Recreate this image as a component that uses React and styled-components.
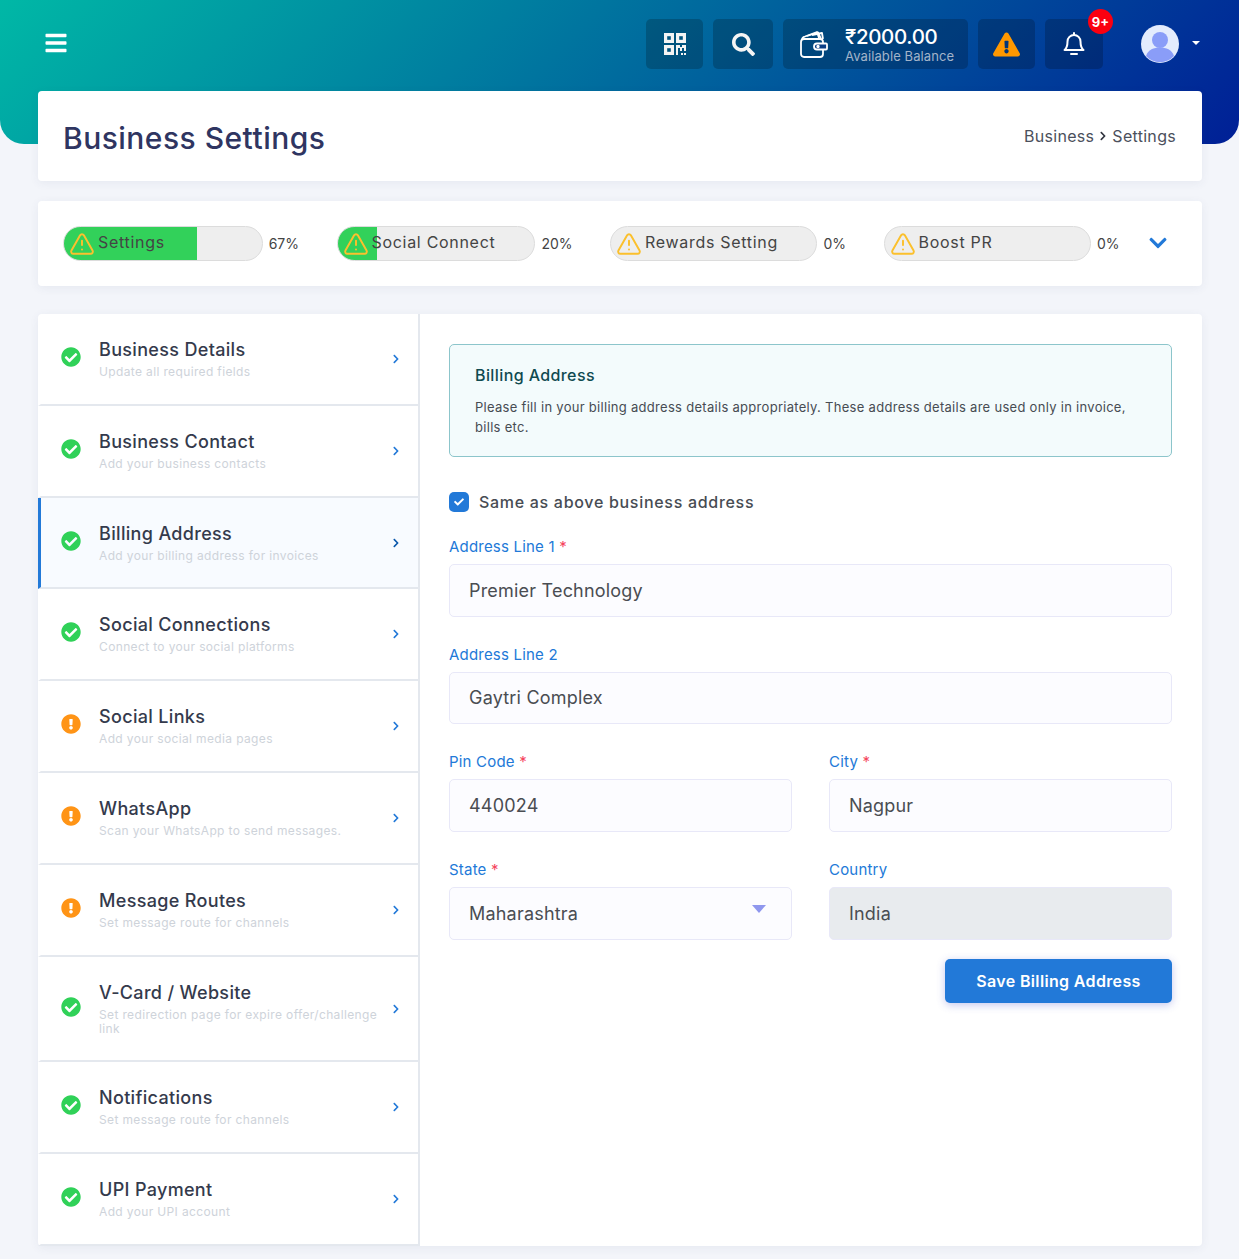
import styled, { createGlobalStyle } from 'styled-components';
import {
  FaBars,
  FaSearch,
  FaExclamationTriangle,
  FaChevronDown,
  FaChevronRight,
  FaCheckCircle,
  FaExclamationCircle,
  FaCheck,
} from 'react-icons/fa';
import { TriangleAlert } from 'lucide-react';

const GlobalStyle = createGlobalStyle`
  * { box-sizing: border-box; }
  body {
    margin: 0;
    background: #f3f5fa;
    font-family: Inter, "Noto Sans", "Liberation Sans", sans-serif;
    color: #444;
  }
`;

const Page = styled.div`
  min-height: 1259px;
  padding-bottom: 13px;
`;

const TopBand = styled.header`
  height: 144px;
  padding: 19px 39px 0 43.5px;
  display: flex;
  align-items: flex-start;
  background: linear-gradient(135deg, #00b8a6 0%, #001f96 100%);
  border-radius: 0 0 24px 24px;
  color: #fff;
`;

const Burger = styled.div`
  height: 50px;
  display: flex;
  align-items: center;
  font-size: 24px;
  margin-right: auto;
  margin-top: -1px;
`;

const ToolRow = styled.div`
  display: flex;
  gap: 10px;
`;

const ToolButton = styled.div`
  position: relative;
  width: ${(p) => p.$w}px;
  height: 50px;
  display: flex;
  align-items: center;
  justify-content: center;
  background: rgba(0, 0, 0, 0.2);
  border-radius: 5px;
`;

const WalletButton = styled(ToolButton)`
  justify-content: flex-start;
  padding-left: 17px;
  gap: 17px;
`;

const Balance = styled.div`
  display: flex;
  flex-direction: column;
`;

const Amount = styled.span`
  font-size: 20.5px;
  line-height: 24px;
  font-weight: 500;
  letter-spacing: -0.35px;
  margin-top: 1px;
`;

const BalanceNote = styled.span`
  font-size: 13px;
  line-height: 15px;
  letter-spacing: 0.1px;
  color: #a3b4c9;
`;

const Badge = styled.span`
  position: absolute;
  top: -10px;
  right: -10px;
  width: 25px;
  height: 25px;
  border-radius: 50%;
  background: #fb0010;
  display: flex;
  align-items: center;
  justify-content: center;
  font-size: 13px;
  font-weight: 700;
`;

const UserMenu = styled.div`
  height: 50px;
  margin-left: 38px;
  display: flex;
  align-items: center;
  gap: 13px;
`;

const Avatar = styled.svg`
  width: 38px;
  height: 38px;
  display: block;
`;

const MenuCaret = styled.span`
  width: 0;
  height: 0;
  border-left: 4px solid transparent;
  border-right: 4px solid transparent;
  border-top: 4px solid #fff;
  margin-top: -2px;
`;

const Content = styled.main`
  margin: -53px 37px 0 38px;
  display: flex;
  flex-direction: column;
`;

const Card = styled.section`
  background: #fff;
  border-radius: 4px;
  box-shadow: 0 2px 10px rgba(60, 70, 120, 0.07);
`;

const TitleCard = styled(Card)`
  height: 90px;
  padding: 3px 26px 0 25px;
  display: flex;
  align-items: center;
  justify-content: space-between;
`;

const PageTitle = styled.h1`
  margin: 0;
  font-size: 30px;
  font-weight: 500;
  letter-spacing: 0.47px;
  color: #2f3561;
`;

const Crumbs = styled.div`
  display: flex;
  align-items: center;
  gap: 4px;
  font-size: 16px;
  letter-spacing: 0.3px;
  color: #4b505c;
  margin-top: -3px;
`;

const CrumbArrow = styled.span`
  display: flex;
  font-size: 10px;
  color: #30343f;
`;

const ProgressCard = styled(Card)`
  margin-top: 20px;
  height: 85px;
  padding: 0 25px;
  display: grid;
  grid-template-columns: repeat(4, 236px) 1fr;
  column-gap: 37.5px;
  align-items: center;
`;

const ProgressItem = styled.div`
  display: flex;
  align-items: center;
  gap: 6px;
`;

const Pill = styled.div`
  flex: 1;
  height: 35px;
  padding-left: 5px;
  display: flex;
  align-items: center;
  gap: 3px;
  border: 1px solid #dcdcdc;
  border-radius: 18px;
  background: linear-gradient(
    to right,
    #32d15a ${(p) => p.$pct}%,
    #eeeeee ${(p) => p.$pct}%
  );
  color: #444;
  white-space: nowrap;
  overflow: hidden;
`;

const PillLabel = styled.span`
  font-size: 16px;
  letter-spacing: 0.7px;
  margin-top: -3px;
`;

const Percent = styled.span`
  font-size: 14px;
  color: #444;
`;

const Expand = styled.div`
  margin-left: -9px;
  font-size: 20px;
  color: #2279d8;
  display: flex;
  margin-top: -2px;
`;

const MainCard = styled(Card)`
  margin-top: 28px;
  display: flex;
  align-items: stretch;
`;

const Sidebar = styled.nav`
  flex: 0 0 381.5px;
  border-right: 2px solid #e4e8ee;
`;

const SideItem = styled.div`
  display: flex;
  align-items: center;
  padding: 22px 17px 24.8px 20px;
  border-left: 3px solid ${(p) => (p.$active ? '#2279d8' : 'transparent')};
  border-bottom: 2px solid #e4e8ee;
  background: ${(p) => (p.$active ? '#f8fbff' : 'transparent')};
`;

const StatusIcon = styled.div`
  flex: 0 0 20px;
  display: flex;
  font-size: 20px;
  margin-top: -1px;
  color: ${(p) => (p.$warn ? '#ff9416' : '#30d158')};
`;

const SideText = styled.div`
  flex: 1;
  margin-left: 18px;
  margin-right: 12px;
`;

const SideTitle = styled.div`
  font-size: 18px;
  line-height: 27px;
  font-weight: 500;
  letter-spacing: 0.33px;
  color: #343a4c;
`;

const SideNote = styled.div`
  margin-top: 2px;
  font-size: 12px;
  line-height: 14px;
  letter-spacing: 0.36px;
  color: #ced3da;
`;

const SideArrow = styled.div`
  flex: 0 0 auto;
  margin-top: 3px;
  display: flex;
  font-size: 10px;
  color: ${(p) => (p.$active ? '#0a57ab' : '#2279d8')};
`;

const FormPanel = styled.div`
  flex: 1;
  padding: 30px 30px 30px 29.5px;
`;

const InfoBox = styled.div`
  padding: 18px 25px 19px;
  background: #f3fbfc;
  border: 1px solid #8cc5cb;
  border-radius: 5px;
`;

const InfoTitle = styled.h4`
  margin: 0 0 10px;
  font-size: 16px;
  line-height: 24px;
  font-weight: 500;
  letter-spacing: 0.4px;
  color: #0f4a50;
`;

const InfoText = styled.p`
  margin: 0;
  font-size: 13px;
  line-height: 20px;
  letter-spacing: 0.29px;
  color: #474c53;
`;

const CheckRow = styled.label`
  margin: 35px 0 22px;
  height: 20px;
  display: flex;
  align-items: center;
  gap: 10px;
  font-size: 16px;
  font-weight: 500;
  letter-spacing: 0.7px;
  color: #474c53;
`;

const CheckBox = styled.span`
  width: 20px;
  height: 20px;
  display: flex;
  align-items: center;
  justify-content: center;
  border-radius: 5px;
  background: #2279d8;
  color: #fff;
  font-size: 10px;
`;

const FieldGrid = styled.div`
  display: grid;
  grid-template-columns: 1fr 1fr;
  column-gap: 37px;
`;

const Field = styled.div`
  grid-column: ${(p) => (p.$wide ? '1 / -1' : 'auto')};
  margin-bottom: 25.07px;
  position: relative;
`;

const Label = styled.label`
  display: block;
  padding-top: 1px;
  margin-bottom: 6px;
  font-size: 15px;
  line-height: 23px;
  letter-spacing: 0.2px;
  color: #2279d8;
`;

const Required = styled.span`
  color: #f5455c;
`;

const controlStyle = `
  display: block;
  width: 100%;
  height: 52.6px;
  padding: 0 19px;
  border: 1px solid #e8e8f8;
  border-radius: 5px;
  font-family: inherit;
  font-size: 18px;
  letter-spacing: 0.2px;
  color: #4a4d52;
  outline: none;
`;

const Input = styled.input`
  ${controlStyle}
  background: ${(p) => (p.disabled ? '#e8ebee' : '#fcfcff')};
  opacity: 1;
`;

const Select = styled.select`
  ${controlStyle}
  background: #fcfcff;
  appearance: none;
`;

const SelectCaret = styled.span`
  position: absolute;
  right: 26px;
  bottom: 27px;
  width: 0;
  height: 0;
  border-left: 7.5px solid transparent;
  border-right: 7.5px solid transparent;
  border-top: 8px solid #8f97ee;
`;

const FormActions = styled.div`
  margin-top: -5.5px;
  display: flex;
  justify-content: flex-end;
`;

const SaveButton = styled.button`
  width: 227px;
  height: 44px;
  border: none;
  border-radius: 5px;
  background: #2279d8;
  color: #fff;
  font-family: inherit;
  font-size: 16px;
  font-weight: 600;
  letter-spacing: 0.35px;
  box-shadow: 0 2px 8px rgba(60, 70, 200, 0.3);
`;

const QrIcon = () => (
  <svg width="22" height="22" viewBox="0 0 22 22" fill="none">
    <g stroke="#f4f4f4" strokeWidth="3.2">
      <rect x="1.6" y="1.6" width="6.800" height="6.800" />
      <rect x="13.600" y="1.6" width="6.800" height="6.800" />
      <rect x="1.6" y="13.600" width="6.800" height="6.800" />
    </g>
    <path d="M12 12h4v2h2v-2h4v6h-2v-3h-2v3h-2v-3h-2v7h-2z" fill="#f4f4f4" />
    <path d="M17 20h2v2h-2zM20 20h2v2h-2z" fill="#f4f4f4" />
  </svg>
);

const WalletIcon = () => (
  <svg width="28" height="28" viewBox="0 0 28 28" fill="none" stroke="#fff" strokeWidth="1.8" strokeLinejoin="round">
    <rect x="1" y="9" width="22" height="18" rx="3" />
    <path d="M2 10c0-2 1-3 3-3.500L17 2l2 6" />
    <path d="M7 6l11-3.500L21 9" />
    <path d="M12 5l10-2 1 6" />
    <path d="M17 13.500h9a1 1 0 0 1 1 1v4a1 1 0 0 1-1 1h-9a3 3 0 0 1 0-6z" fill="#0a3f86" />
    <circle cx="18" cy="16.500" r="0.8" />
  </svg>
);

const BellIcon = () => (
  <svg width="22" height="24" viewBox="0 0 22 24" fill="none" stroke="#fff" strokeWidth="2" strokeLinejoin="round" strokeLinecap="round">
    <path d="M11 1v2" />
    <path d="M11 3a6.500 6.500 0 0 0-6.500 6.500c0 5-1 7-3 8.500h19c-2-1.500-3-3.500-3-8.500A6.500 6.500 0 0 0 11 3z" />
    <path d="M8 22h6" />
  </svg>
);

const AvatarIcon = () => (
  <Avatar viewBox="0 0 38 38">
    <circle cx="19" cy="19" r="19" fill="#e4ecfd" />
    <circle cx="19" cy="15" r="8" fill="#8a9df8" />
    <path d="M5 31c2-6.500 8-8.500 14-8.500S31 24.500 33 31a19 19 0 0 1-28 0z" fill="#8a9df8" />
  </Avatar>
);

const progress = [
  { label: 'Settings', pct: 67 },
  { label: 'Social Connect', pct: 20 },
  { label: 'Rewards Setting', pct: 0 },
  { label: 'Boost PR', pct: 0 },
];

const sections = [
  { title: 'Business Details', note: 'Update all required fields' },
  { title: 'Business Contact', note: 'Add your business contacts' },
  { title: 'Billing Address', note: 'Add your billing address for invoices', active: true },
  { title: 'Social Connections', note: 'Connect to your social platforms' },
  { title: 'Social Links', note: 'Add your social media pages', warn: true },
  { title: 'WhatsApp', note: 'Scan your WhatsApp to send messages.', warn: true },
  { title: 'Message Routes', note: 'Set message route for channels', warn: true },
  { title: 'V-Card / Website', note: 'Set redirection page for expire offer/challenge link' },
  { title: 'Notifications', note: 'Set message route for channels' },
  { title: 'UPI Payment', note: 'Add your UPI account' },
];

export default function App() {
  return (
    <Page>
      <GlobalStyle />
      <TopBand>
        <Burger>
          <FaBars />
        </Burger>
        <ToolRow>
          <ToolButton $w={57}>
            <QrIcon />
          </ToolButton>
          <ToolButton $w={60}>
            <FaSearch size={23} color="#f5f5f5" />
          </ToolButton>
          <WalletButton $w={185}>
            <WalletIcon />
            <Balance>
              <Amount>₹2000.00</Amount>
              <BalanceNote>Available Balance</BalanceNote>
            </Balance>
          </WalletButton>
          <ToolButton $w={57}>
            <FaExclamationTriangle size={27} color="#ff9800" />
          </ToolButton>
          <ToolButton $w={58}>
            <BellIcon />
            <Badge>9+</Badge>
          </ToolButton>
        </ToolRow>
        <UserMenu>
          <AvatarIcon />
          <MenuCaret />
        </UserMenu>
      </TopBand>

      <Content>
        <TitleCard>
          <PageTitle>Business Settings</PageTitle>
          <Crumbs>
            Business
            <CrumbArrow>
              <FaChevronRight />
            </CrumbArrow>
            Settings
          </Crumbs>
        </TitleCard>

        <ProgressCard>
          {progress.map((item) => (
            <ProgressItem key={item.label}>
              <Pill $pct={item.pct}>
                <TriangleAlert size={26} color="#fbc02d" strokeWidth={1.8} />
                <PillLabel>{item.label}</PillLabel>
              </Pill>
              <Percent>{item.pct}%</Percent>
            </ProgressItem>
          ))}
          <Expand>
            <FaChevronDown />
          </Expand>
        </ProgressCard>

        <MainCard>
          <Sidebar>
            {sections.map((s) => (
              <SideItem key={s.title} $active={s.active}>
                <StatusIcon $warn={s.warn}>
                  {s.warn ? <FaExclamationCircle /> : <FaCheckCircle />}
                </StatusIcon>
                <SideText>
                  <SideTitle>{s.title}</SideTitle>
                  <SideNote>{s.note}</SideNote>
                </SideText>
                <SideArrow $active={s.active}>
                  <FaChevronRight />
                </SideArrow>
              </SideItem>
            ))}
          </Sidebar>

          <FormPanel>
            <InfoBox>
              <InfoTitle>Billing Address</InfoTitle>
              <InfoText>
                Please fill in your billing address details appropriately. These address details are used only in invoice, bills etc.
              </InfoText>
            </InfoBox>

            <CheckRow>
              <CheckBox>
                <FaCheck />
              </CheckBox>
              Same as above business address
            </CheckRow>

            <FieldGrid>
              <Field $wide>
                <Label>Address Line 1 <Required>*</Required></Label>
                <Input defaultValue="Premier Technology" />
              </Field>
              <Field $wide>
                <Label>Address Line 2</Label>
                <Input defaultValue="Gaytri Complex" />
              </Field>
              <Field>
                <Label>Pin Code <Required>*</Required></Label>
                <Input defaultValue="440024" />
              </Field>
              <Field>
                <Label>City <Required>*</Required></Label>
                <Input defaultValue="Nagpur" />
              </Field>
              <Field>
                <Label>State <Required>*</Required></Label>
                <Select defaultValue="Maharashtra">
                  <option>Maharashtra</option>
                </Select>
                <SelectCaret />
              </Field>
              <Field>
                <Label>Country</Label>
                <Input defaultValue="India" disabled />
              </Field>
            </FieldGrid>

            <FormActions>
              <SaveButton>Save Billing Address</SaveButton>
            </FormActions>
          </FormPanel>
        </MainCard>
      </Content>
    </Page>
  );
}
